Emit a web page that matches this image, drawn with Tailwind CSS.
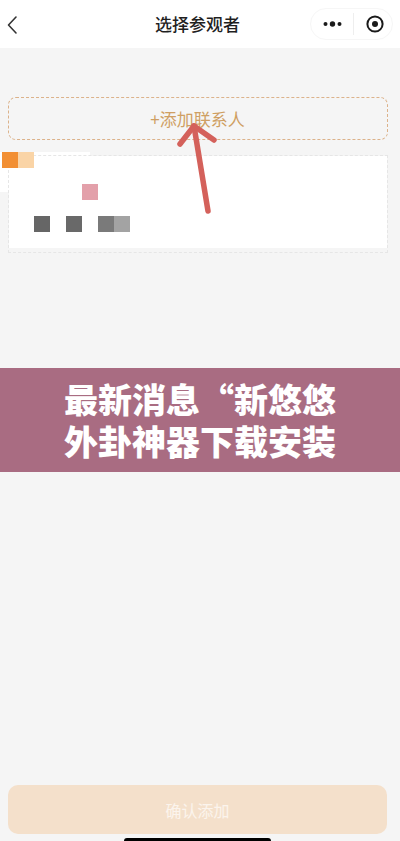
<!DOCTYPE html>
<html lang="zh-CN">
<head>
    <meta charset="UTF-8">
    <meta name="viewport" content="width=device-width, initial-scale=1.0">
    <title>选择参观者</title>
    <script src="https://cdn.jsdelivr.net/npm/@tailwindcss/browser@4"></script>
</head>
<body class="bg-[#f5f5f5] font-['Noto_Sans_CJK_SC','Noto_Sans',sans-serif]">

<div class="relative w-[400px] h-[841px] overflow-hidden flex flex-col">
    <!-- nav bar -->
    <header class="h-12 shrink-0 bg-white relative flex items-center justify-center">
        <svg class="absolute left-[6px] top-[15px] w-[12px] h-[20px]" viewBox="0 0 12 20" fill="none" stroke="#333" stroke-width="1.6" stroke-linecap="round" stroke-linejoin="round"><path d="M10 2 L2.5 10 L10 18"/></svg>
        <h1 class="text-[17px] leading-none font-medium text-[#1f1f1f] -mt-[1px] -ml-[5px]">选择参观者</h1>
        <div class="absolute left-[310px] top-[8px] w-[83px] h-[32px] rounded-full border border-[#f6f6f6] flex items-center">
            <svg class="ml-[12px] w-[20px] h-[8px]" viewBox="0 0 20 8" fill="#1a1a1a"><circle cx="2.5" cy="4" r="2"/><circle cx="9.5" cy="4" r="2.7"/><circle cx="16.5" cy="4" r="2"/></svg>
            <div class="ml-[10px] w-px h-[22px] bg-[#eeeeee]"></div>
            <svg class="ml-[12px] w-[18px] h-[18px]" viewBox="0 0 18 18" fill="none"><circle cx="9" cy="9" r="7.6" stroke="#1a1a1a" stroke-width="2"/><circle cx="9" cy="9" r="3" fill="#1a1a1a"/></svg>
        </div>
    </header>

    <main class="flex-1 flex flex-col">
        <!-- add contact -->
        <div class="mt-[49px] ml-[7.5px] w-[380px] h-[43px] rounded-lg border border-dashed border-[#dcb28a] flex items-center justify-center text-[17px] leading-none text-[#cf9f63]">+添加联系人</div>

        <!-- blurred contact card -->
        <div class="relative mt-3 h-[100px]">
            <div class="absolute left-0 top-0 w-[90px] h-[40px] bg-white"></div>
            <div class="absolute left-2 top-[3px] w-[380px] h-[98px] border border-dashed border-[#e6e6e6]">
                <div class="h-[92px] bg-white"></div>
            </div>
            <div class="relative pl-[2px] flex flex-col">
                <div class="flex h-4">
                    <div class="w-4 bg-[#f28f33]"></div>
                    <div class="w-4 bg-[#fad4a6]"></div>
                </div>
                <div class="flex h-4 mt-4 ml-20">
                    <div class="w-4 bg-[#e3a0aa]"></div>
                </div>
                <div class="flex h-4 mt-4 ml-8">
                    <div class="w-4 bg-[#666666]"></div>
                    <div class="w-4 ml-4 bg-[#696969]"></div>
                    <div class="w-4 ml-4 bg-[#7a7a7a]"></div>
                    <div class="w-4 bg-[#a3a3a3]"></div>
                </div>
            </div>
        </div>

        <!-- title banner -->
        <div class="mt-[116px] h-[104px] bg-[#a96c82] flex items-center justify-center text-white text-[34px] leading-[42px] font-black text-center">
            <p>最新消息“新悠悠<br>外卦神器下载安装</p>
        </div>

        <!-- confirm button -->
        <div class="mt-auto mb-[7px] mx-2 w-[379px] h-[49px] rounded-[10px] bg-[#f4e0cb] flex items-center justify-center text-[16px] leading-none text-white/65">确认添加</div>
    </main>

    <!-- home indicator -->
    <div class="absolute left-[124px] bottom-0 w-[147px] h-[3px] rounded-t-sm bg-black"></div>

    <!-- red arrow drawn over the screenshot -->
    <svg class="absolute left-0 top-0 pointer-events-none" width="400" height="260" viewBox="0 0 400 260" fill="none" stroke="#d4615b" stroke-width="5.5" stroke-linecap="round" stroke-linejoin="round">
        <path d="M208 211 L194 126"/>
        <path d="M180 144 L194 126 L214 140"/>
    </svg>
</div>

</body>
</html>
